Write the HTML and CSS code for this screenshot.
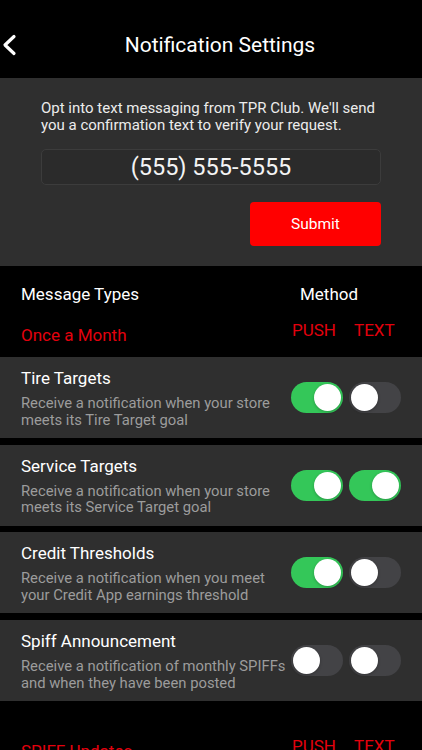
FILE: index.html
```html
<!DOCTYPE html>
<html lang="en">
<head>
<meta charset="utf-8">
<title>Notification Settings</title>
<link rel="stylesheet" href="styles.css">
</head>
<body>
<div class="screen">
  <header class="navbar">
    <div class="nav-left">
      <svg class="back" width="16" height="22" viewBox="0 0 16 22"><polyline points="13,2.5 4,11 13,19.5" fill="none" stroke="#fff" stroke-width="3.2" stroke-linecap="round" stroke-linejoin="round"/></svg>
    </div>
    <h1 class="nav-title">Notification Settings</h1>
    <div class="nav-right"></div>
  </header>

  <section class="optin">
    <p class="optin-text">Opt into text messaging from TPR Club. We'll send you a confirmation text to verify your request.</p>
    <div class="phone-input">(555) 555-5555</div>
    <div class="submit-row"><button class="submit">Submit</button></div>
  </section>

  <section class="types-head">
    <span>Message Types</span>
    <span class="method">Method</span>
  </section>

  <div class="group-label first">
    <span class="group-name">Once a Month</span>
    <span class="methods"><span>PUSH</span><span>TEXT</span></span>
  </div>

  <div class="row">
    <div class="row-text">
      <div class="row-title">Tire Targets</div>
      <div class="row-desc">Receive a notification when your store meets its Tire Target goal</div>
    </div>
    <div class="toggles"><span class="toggle on"></span><span class="toggle"></span></div>
  </div>
  <div class="row">
    <div class="row-text">
      <div class="row-title">Service Targets</div>
      <div class="row-desc">Receive a notification when your store meets its Service Target goal</div>
    </div>
    <div class="toggles"><span class="toggle on"></span><span class="toggle on"></span></div>
  </div>
  <div class="row">
    <div class="row-text">
      <div class="row-title">Credit Thresholds</div>
      <div class="row-desc">Receive a notification when you meet your Credit App earnings threshold</div>
    </div>
    <div class="toggles"><span class="toggle on"></span><span class="toggle"></span></div>
  </div>
  <div class="row">
    <div class="row-text">
      <div class="row-title">Spiff Announcement</div>
      <div class="row-desc">Receive a notification of monthly SPIFFs and when they have been posted</div>
    </div>
    <div class="toggles"><span class="toggle"></span><span class="toggle"></span></div>
  </div>

  <div class="group-label second">
    <span class="group-name">SPIFF Updates</span>
    <span class="methods"><span>PUSH</span><span>TEXT</span></span>
  </div>
</div>
</body>
</html>
```

FILE: styles.css
```css
* { box-sizing: border-box; }
html, body { margin: 0; padding: 0; background: #000; }
body {
  font-family: Roboto, "Noto Sans", "Liberation Sans", sans-serif;
  color: #fff;
  width: 422px;
  height: 750px;
  overflow: hidden;
}
.screen { display: flex; flex-direction: column; }

.navbar {
  height: 78px;
  display: grid;
  grid-template-columns: 1fr auto 1fr;
  align-items: center;
  padding-top: 12px;
  background: #000;
}
.nav-left { padding-left: 1px; display: flex; align-items: center; }
.nav-right { width: 20px; justify-self: end; }
.back { display: block; }
.nav-title {
  margin: 0 0 0 18px;
  font-size: 21px;
  font-weight: 400;
}

.optin {
  background: #2f2f2f;
  padding: 22px 41px 20px;
}
.optin-text {
  margin: 0;
  font-size: 15px;
  line-height: 17px;
  color: #ececec;
}
.phone-input {
  margin-top: 15px;
  height: 36px;
  border: 1px solid #3c3c3c;
  border-radius: 5px;
  background: #2b2b2b;
  font-size: 23.5px;
  display: flex;
  align-items: center;
  justify-content: center;
  color: #f4f4f4;
}
.submit-row { display: flex; justify-content: flex-end; margin-top: 17px; }
.submit {
  width: 131px;
  height: 44px;
  border: none;
  border-radius: 4px;
  background: #ff0000;
  color: #fff;
  font-family: inherit;
  font-size: 15.5px;
}

.types-head {
  display: flex;
  justify-content: space-between;
  padding: 17px 21px 0;
  font-size: 17px;
  line-height: 22px;
}
.types-head .method { width: 110px; padding-left: 9px; }

.group-label {
  display: flex;
  justify-content: space-between;
  padding: 0 21px;
  color: #e3000d;
  font-size: 17px;
  flex-shrink: 0;
}
.group-label.first { height: 52px; }
.group-label.second { height: 60px; padding-top: 13px; }
.group-name { padding-top: 20px; line-height: 20px; }
.methods {
  width: 110px;
  display: flex;
  gap: 18px;
  padding-top: 15px;
  line-height: 20px;
  padding-left: 1px;
}

.row {
  height: 81px;
  flex-shrink: 0;
  margin-bottom: 6.7px;
  background: #2f2f2f;
  display: flex;
  align-items: flex-start;
  padding: 10px 21px 0;
  gap: 4px;
}
.row:last-of-type { margin-bottom: 0; }
.row-text { flex: 1; min-width: 0; }
.row-title { font-size: 17px; line-height: 22px; }
.row-desc {
  margin-top: 6px;
  font-size: 14.8px;
  line-height: 16.5px;
  color: #9c9c9c;
}
.toggles { display: flex; gap: 6px; margin-top: 15px; }
.toggle {
  width: 52px;
  height: 31px;
  border-radius: 16px;
  background: #434346;
  position: relative;
}
.toggle::after {
  content: "";
  position: absolute;
  top: 2px;
  left: 2px;
  width: 27px;
  height: 27px;
  border-radius: 50%;
  background: #fff;
  box-shadow: 0 1px 3px rgba(0,0,0,0.25);
}
.toggle.on { background: #34c759; }
.toggle.on::after { left: 23px; }
```
